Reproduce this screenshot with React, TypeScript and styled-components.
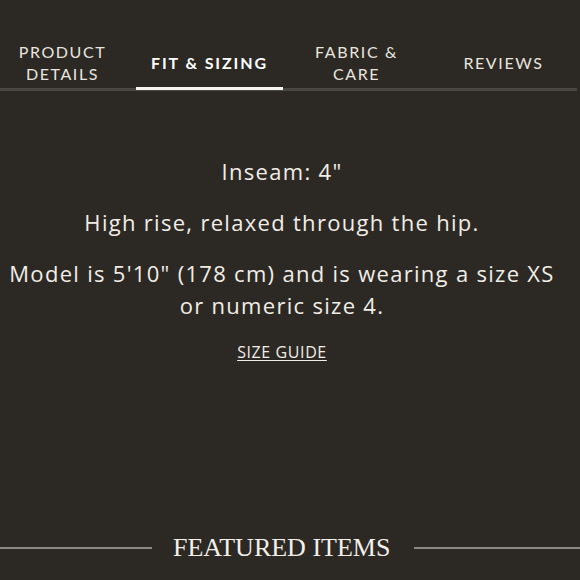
import React from "react";
import styled, { createGlobalStyle } from "styled-components";

const Global = createGlobalStyle`
  html, body { margin: 0; padding: 0; background: #2c2925; }
  body { font-family: "Lato", "Noto Sans", sans-serif; color: #f1ede6; }
`;

const Page = styled.div`
  width: 580px;
  height: 580px;
  overflow: hidden;
  background: #2c2925;
`;

const TabBar = styled.div`
  width: 577px;
  padding-top: 38px;
  border-bottom: 3px solid #4a4642;
`;

const TabRow = styled.div`
  display: grid;
  grid-template-columns: repeat(4, 147px);
  margin-left: -11px;
`;

const Tab = styled.div<{ $active?: boolean }>`
  position: relative;
  height: 50px;
  display: flex;
  align-items: center;
  justify-content: center;
  text-align: center;
  font-size: 16px;
  line-height: 22px;
  letter-spacing: ${(p) => (p.$active ? "1.9px" : "1.6px")};
  text-transform: uppercase;
  font-weight: ${(p) => (p.$active ? 700 : 400)};
  color: ${(p) => (p.$active ? "#ffffff" : "#e9e5de")};
  &::after {
    content: "";
    display: ${(p) => (p.$active ? "block" : "none")};
    position: absolute;
    left: 0;
    right: 0;
    bottom: -2px;
    height: 3px;
    background: #f7f5f0;
  }
`;

const Content = styled.div`
  width: 564px;
  padding-top: 64px;
  text-align: center;
  font-family: "Open Sans", "Noto Sans", sans-serif;
`;

const Para = styled.p`
  margin: 0 0 19px;
  font-size: 22px;
  line-height: 32px;
  letter-spacing: 1.3px;
`;

const SizeGuide = styled.a`
  display: inline-block;
  margin-top: 2px;
  font-size: 16px;
  line-height: 20px;
  letter-spacing: 0.6px;
  color: #f1ede6;
  text-decoration: underline;
  text-underline-offset: 2px;
`;

const Featured = styled.div`
  display: flex;
  align-items: center;
  margin-top: 170px;
  height: 30px;
`;

const Rule = styled.div<{ $w?: number }>`
  height: 2px;
  background: #8c8882;
  ${(p) => (p.$w ? `width: ${p.$w}px;` : "flex: 1;")}
`;

const FeaturedTitle = styled.h2`
  margin: 0 24px 0 21px;
  font-family: "Liberation Serif", "Times New Roman", serif;
  font-weight: 400;
  font-size: 26px;
  letter-spacing: 0px;
  color: #f3efe8;
  white-space: nowrap;
`;

export default function App() {
  return (
    <Page>
      <Global />
      <TabBar>
        <TabRow>
          <Tab>Product<br />Details</Tab>
          <Tab $active>Fit &amp; Sizing</Tab>
          <Tab>Fabric &amp;<br />Care</Tab>
          <Tab>Reviews</Tab>
        </TabRow>
      </TabBar>
      <Content>
        <Para>Inseam: 4"</Para>
        <Para>High rise, relaxed through the hip.</Para>
        <Para>
          Model is 5'10" (178 cm) and is wearing a size XS
          <br />
          or numeric size 4.
        </Para>
        <SizeGuide href="#">SIZE GUIDE</SizeGuide>
      </Content>
      <Featured>
        <Rule $w={152} />
        <FeaturedTitle>FEATURED ITEMS</FeaturedTitle>
        <Rule />
      </Featured>
    </Page>
  );
}
